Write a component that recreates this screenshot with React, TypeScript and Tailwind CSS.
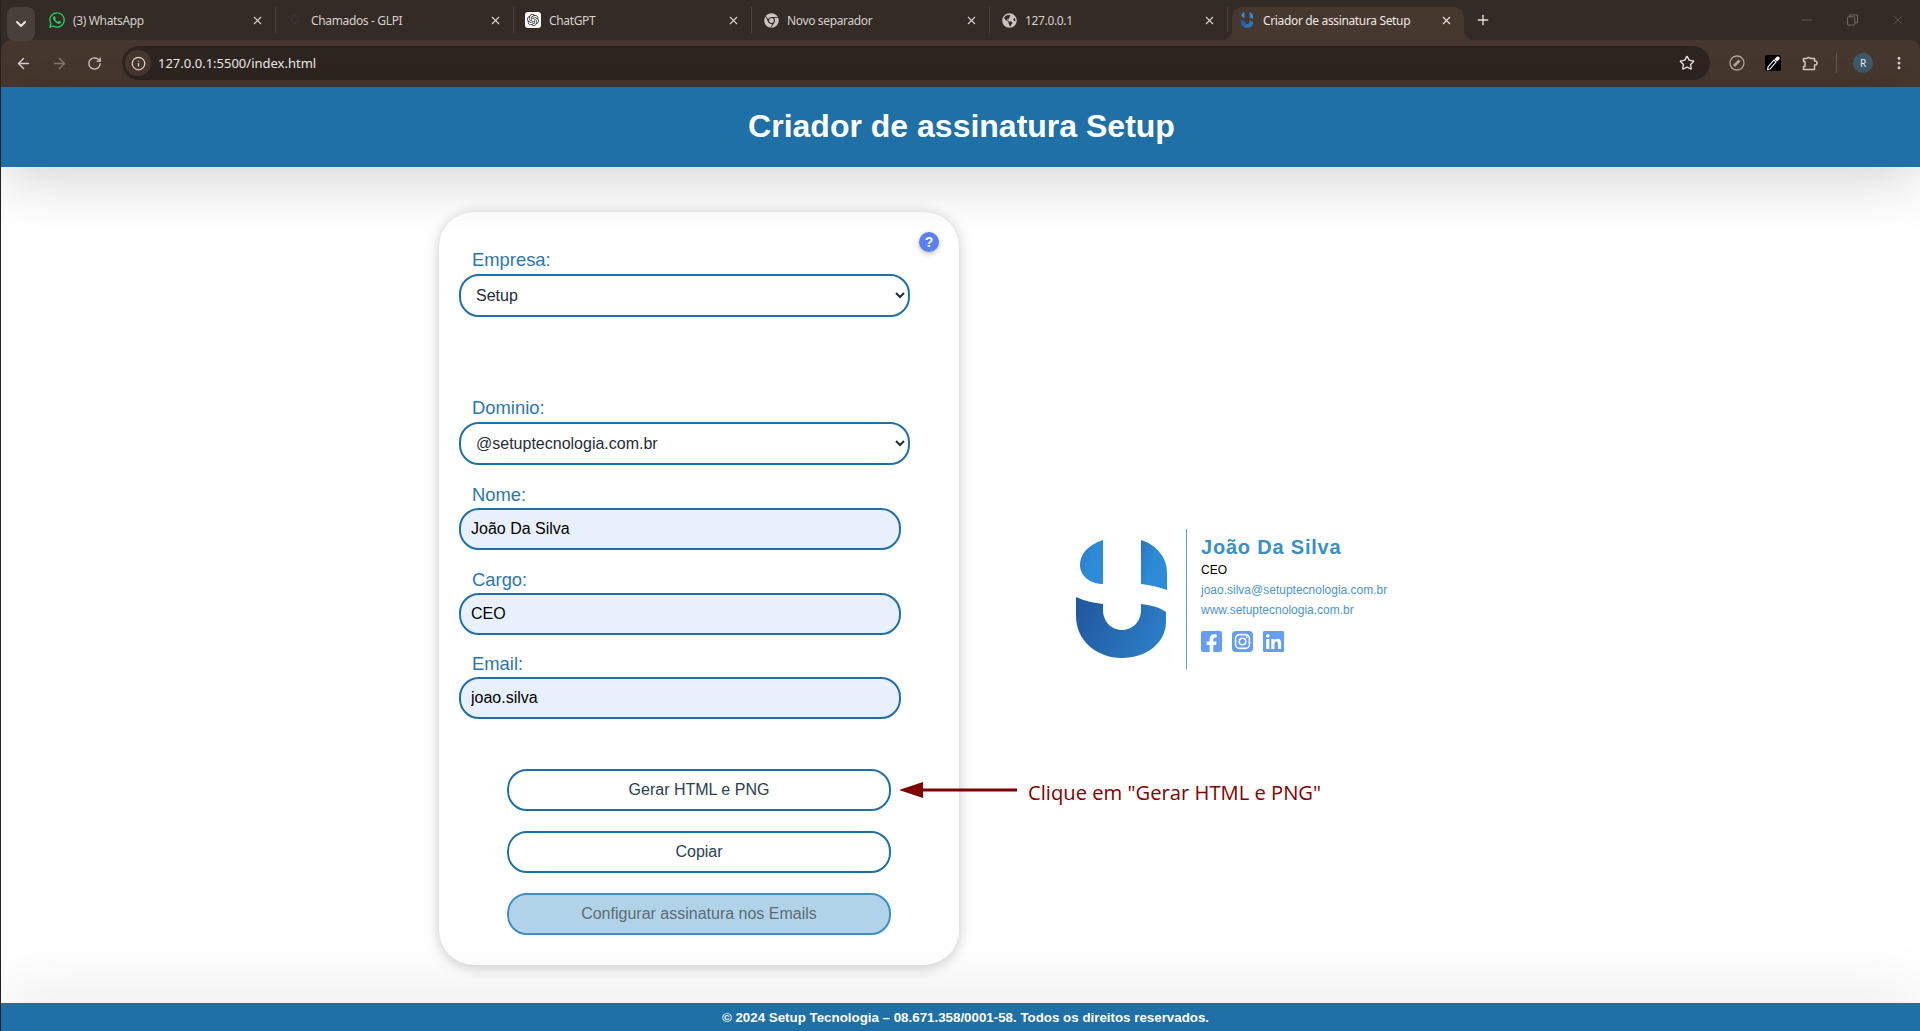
import React from 'react'
import { ArrowLeft, ArrowRight, ChevronDown, Info, Minus, MoreVertical, Plus, RotateCw, Star, X } from 'lucide-react'
import { FaChrome, FaFacebookSquare, FaGlobeAmericas, FaLinkedin, FaWhatsapp } from 'react-icons/fa'
import { SiOpenai } from 'react-icons/si'

const SetupLogo = ({ className }: { className?: string }) => (
  <svg viewBox="0 0 92 119" className={className}>
    <defs>
      <linearGradient id="logoTop" x1="0" y1="0" x2="1" y2="0.6">
        <stop offset="0" stopColor="#2a75bb" />
        <stop offset="0.5" stopColor="#2d8ad6" />
        <stop offset="1" stopColor="#2d8cd9" />
      </linearGradient>
      <linearGradient id="logoBottom" x1="0" y1="0.3" x2="1" y2="0.6">
        <stop offset="0" stopColor="#21599f" />
        <stop offset="1" stopColor="#2c7fc8" />
      </linearGradient>
    </defs>
    <path d="M27 0 V44 C12 44 4 34 4 25 C4 14 12 5 27 0 Z" fill="url(#logoTop)" />
    <path d="M65 0 C81 5 91 18 91 32 V50 C83 47 74 45 65 44 Z" fill="url(#logoTop)" />
    <path d="M0 57 C9 61 18 63 27 64 V70 C27 81 35 90 46 90 C57 90 65 81 65 70 V64 C74 65 83 67 90 72 V82 C90 103 70 118 46 118 C20 118 0 100 0 76 Z" fill="url(#logoBottom)" />
  </svg>
)

const tabs = [
  { title: '(3) WhatsApp', icon: <FaWhatsapp className="w-[18px] h-[18px] shrink-0 text-[#25d366]" /> },
  { title: 'Chamados - GLPI', icon: <span className="w-4 text-center text-[13px] font-bold leading-4 text-[#3a3330]">G</span> },
  {
    title: 'ChatGPT',
    icon: (
      <span className="w-4 h-4 rounded-[3px] bg-white flex items-center justify-center">
        <SiOpenai className="w-3 h-3 text-[#333]" />
      </span>
    ),
  },
  { title: 'Novo separador', icon: <FaChrome className="w-[15px] h-[15px] text-[#c9c3bf]" /> },
  { title: '127.0.0.1', icon: <FaGlobeAmericas className="w-[15px] h-[15px] text-[#c9c3bf]" /> },
]

const Tab = ({ title, icon }: { title: string; icon: React.ReactNode }) => (
  <div className="w-[238px] h-[26px] mt-[7px] shrink-0 flex items-center pl-[11px] pr-[11px] border-r border-[#4a413c]">
    <span className="w-4 flex justify-center shrink-0">{icon}</span>
    <span className="ml-2 flex-1 text-[12px] text-[#d5cfcb] font-['Noto_Sans',sans-serif] tracking-[-0.35px] pt-[1px]">{title}</span>
    <X className="w-[13px] h-[13px] text-[#d8d2ce]" strokeWidth={2} />
  </div>
)

const BrowserChrome = () => (
  <div className="bg-[#342b27]">
    {/* tab strip */}
    <div className="h-10 flex items-start">
      <div className="ml-[6px] mt-[7px] w-[28px] h-[34px] rounded-lg bg-[#4a403b] flex items-center justify-center shrink-0">
        <ChevronDown className="w-4 h-4 text-[#e8e3e0]" strokeWidth={3} />
      </div>
      <div className="ml-[3px] flex">
        {tabs.map((t) => (
          <Tab key={t.title} title={t.title} icon={t.icon} />
        ))}
        {/* active tab */}
        <div className="relative w-[232px] h-[33px] mt-[7px] ml-[4px] rounded-t-[10px] bg-[#46382f] flex items-center pl-[7px] pr-[11px] pb-[7px]">
          <SetupLogo className="w-4 h-4 shrink-0" />
          <span className="ml-2 flex-1 text-[12px] text-[#ece7e4] font-['Noto_Sans',sans-serif] tracking-[-0.35px] pt-[1px]">Criador de assinatura Setup</span>
          <X className="w-[13px] h-[13px] text-[#ece7e4]" strokeWidth={2} />
          <span className="absolute -left-[8px] bottom-0 w-2 h-2 bg-[radial-gradient(circle_at_0_0,#342b27_7.5px,#46382f_8px)]" />
          <span className="absolute -right-[8px] bottom-0 w-2 h-2 bg-[radial-gradient(circle_at_100%_0,#342b27_7.5px,#46382f_8px)]" />
        </div>
        <Plus className="ml-[11px] mt-[12px] w-4 h-4 text-[#e6e1de]" strokeWidth={2} />
      </div>
      <div className="ml-auto flex items-center mt-[12px] pr-[15px] text-[#7a6f6a]">
        <Minus className="w-4 h-4" strokeWidth={1} />
        <svg viewBox="0 0 12 12" className="ml-[32px] w-[11px] h-[12px]" fill="none" stroke="currentColor">
          <rect x="0.5" y="2.5" width="8" height="9" rx="1" />
          <path d="M3 2.5 V0.5 H11.5 V9 H8.5" />
        </svg>
        <X className="ml-[33px] w-[14px] h-[14px]" strokeWidth={1} />
      </div>
    </div>
    {/* toolbar */}
    <div className="h-[47px] bg-[#46382f] rounded-t-[10px] flex items-start pt-[6px] border-b border-[#3f3a38]">
      <div className="w-[121px] h-[34px] flex items-center pl-[14px] gap-[19px] shrink-0">
        <ArrowLeft className="w-[17px] h-[17px] text-[#d5cfcb]" strokeWidth={2} />
        <ArrowRight className="w-[17px] h-[17px] text-[#85796f]" strokeWidth={2} />
        <RotateCw className="w-[15px] h-[15px] text-[#d5cfcb]" strokeWidth={2} />
      </div>
      <div className="h-[34px] w-[1588px] rounded-full bg-[#2e2521] flex items-center pl-[3px] pr-[15px]">
        <span className="w-[26px] h-[26px] rounded-full bg-[#46382f] flex items-center justify-center">
          <Info className="w-[15px] h-[15px] text-[#ded8d4]" strokeWidth={2} />
        </span>
        <span className="ml-[7px] flex-1 text-[13px] text-[#f0ecea] font-['Noto_Sans',sans-serif] pt-[1px]">127.0.0.1:5500/index.html</span>
        <Star className="w-4 h-4 text-[#ece7e4]" strokeWidth={2} />
      </div>
      <div className="flex items-center h-[34px] pl-[19px] text-[#b5a79e]">
        <svg viewBox="0 0 16 16" className="w-4 h-4" fill="none" stroke="currentColor">
          <circle cx="8" cy="8" r="7" strokeWidth="1.3" />
          <path d="M5 11 L10.5 5.5" strokeWidth="2.6" />
        </svg>
        <span className="ml-[20px] w-4 h-4 rounded-[2px] bg-black flex items-center justify-center">
          <svg viewBox="0 0 16 16" className="w-4 h-4">
            <path d="M9.5 4 L10.5 3 C11.5 1 14 1 14.6 2.4 C15.2 4 14 5 13 5.6 L12 6.5 Z" fill="#fff" />
            <path d="M9 5 L11 7 L5 14 L2.6 14.6 L3 12 Z" fill="none" stroke="#fff" strokeWidth="1.1" />
          </svg>
        </span>
        <svg viewBox="0 0 16 16" className="ml-[21px] w-4 h-4" fill="none" stroke="#d8c9bf" strokeWidth="1.5" strokeLinejoin="round">
          <path d="M1.5 3.5 H5 A2 2 0 0 1 8.5 3.5 H12.5 V6 H13 A2 2 0 0 1 13 10 H12.5 V14.5 H1.5 V11.5 H3 V6.5 H1.5 Z" />
        </svg>
        <span className="ml-[18px] w-px h-5 bg-[#655850]" />
        <span className="ml-[16px] w-[20px] h-[20px] rounded-full bg-[#3f5a6b] text-[#e6eef3] text-[10px] flex items-center justify-center font-['Noto_Sans',sans-serif]">R</span>
        <MoreVertical className="ml-[18px] w-4 h-4 text-[#d8d2ce]" strokeWidth={2.5} />
      </div>
    </div>
  </div>
)

const Label = ({ children, className = '' }: { children: React.ReactNode; className?: string }) => (
  <label className={`block text-[18.4px] leading-[21px] text-[#2f76ad] ml-[13px] ${className}`}>{children}</label>
)

const selectCls =
  "block w-[451px] h-[43px] rounded-[20px] border-2 border-[#2070a8] bg-white pl-[11px] text-[16px] text-[#1f2d3a] font-['Liberation_Sans',sans-serif] outline-none"
const inputCls =
  "block w-[442px] h-[42px] rounded-[20px] border-2 border-[#2070a8] bg-[#e8f0fe] pl-[10px] text-[16px] text-black outline-none"

const SignatureCard = () => (
  <div className="flex h-[140px]">
    <SetupLogo className="w-[92px] h-[119px] mt-[11px] mr-[18px]" />
    <div className="w-px bg-[#5a9de0]" />
    <div className="ml-[14px]">
      <div className="mt-[7px] text-[20px] leading-[22px] font-bold text-[#3a8fc6] tracking-[0.8px]">João Da Silva</div>
      <div className="mt-[5px] text-[12px] leading-[14px] text-black">CEO</div>
      <div className="mt-[6px] text-[12px] leading-[14px] text-[#4f94c8]">joao.silva@setuptecnologia.com.br</div>
      <div className="mt-[6px] text-[12px] leading-[14px] text-[#4f94c8]">www.setuptecnologia.com.br</div>
      <div className="mt-[14px] flex gap-[10px] text-[#659df5]">
        <FaFacebookSquare className="w-[21px] h-[21px] scale-[1.15]" />
        <svg viewBox="0 0 21 21" className="w-[21px] h-[21px]" fill="none" stroke="#fff" strokeWidth="1.6">
          <rect width="21" height="21" rx="4" fill="currentColor" stroke="none" />
          <rect x="3.6" y="3.6" width="13.8" height="13.8" rx="4" />
          <circle cx="10.5" cy="10.5" r="3.3" />
          <circle cx="14.8" cy="6.2" r="0.9" fill="#fff" stroke="none" />
        </svg>
        <FaLinkedin className="w-[21px] h-[21px] scale-[1.15]" />
      </div>
    </div>
  </div>
)

export default function App() {
  return (
    <div className="h-screen overflow-hidden flex flex-col bg-white border-l border-[#222] font-['Liberation_Sans',Arial,sans-serif]">
      <BrowserChrome />

      <header className="relative z-10 h-[80px] shrink-0 bg-[#2070a8] shadow-[0_10px_60px_rgba(0,0,0,0.19)] flex items-center justify-center pb-[2px] pl-[2px]">
        <h1 className="text-[32px] font-bold text-white">Criador de assinatura Setup</h1>
      </header>

      <main className="relative flex-1 flex items-start pl-[438px]">
        {/* form card */}
        <div className="relative mt-[45px] w-[520px] h-[753px] rounded-[35px] bg-white shadow-[0_2px_14px_rgba(0,0,0,0.22)] pl-[20px] pt-[37px]">
          <span className="absolute top-[20px] right-[20px] w-5 h-5 rounded-full bg-[#5b7ff5] text-white text-[14px] font-bold flex items-center justify-center shadow-[0_2px_5px_rgba(0,0,0,0.25)]">?</span>
          <Label>Empresa:</Label>
          <select className={`${selectCls} mt-[4px]`} defaultValue="Setup">
            <option>Setup</option>
          </select>
          <Label className="mt-[80px]">Dominio:</Label>
          <select className={`${selectCls} mt-[4px]`} defaultValue="@setuptecnologia.com.br">
            <option>@setuptecnologia.com.br</option>
          </select>
          <Label className="mt-[19px]">Nome:</Label>
          <input className={`${inputCls} mt-[3px]`} defaultValue="João Da Silva" />
          <Label className="mt-[19px]">Cargo:</Label>
          <input className={`${inputCls} mt-[3px]`} defaultValue="CEO" />
          <Label className="mt-[18px]">Email:</Label>
          <input className={`${inputCls} mt-[3px]`} defaultValue="joao.silva" />

          <div className="mt-[50px] ml-[48px] w-[384px] flex flex-col gap-[20px]">
            <button className="h-[42px] rounded-[20px] border-2 border-[#2070a8] bg-white text-[16px] text-[#2c3e50]">Gerar HTML e PNG</button>
            <button className="h-[42px] rounded-[20px] border-2 border-[#2070a8] bg-white text-[16px] text-[#2c3e50]">Copiar</button>
            <button className="h-[42px] rounded-[20px] border-2 border-[#3d8fc6] bg-[#b0d3e9] text-[16px] text-[#5f6b73]">Configurar assinatura nos Emails</button>
          </div>

          {/* annotation over the card edge */}
          <div className="absolute left-[460px] top-[566px] flex items-start whitespace-nowrap">
            <svg viewBox="0 0 118 18" className="w-[118px] h-[18px] mt-[3px]">
              <path d="M0 9 L24 1 V7.5 H118 V10.5 H24 V17 Z" fill="#800000" />
            </svg>
            <span className="ml-[11px] mt-[2px] text-[20.2px] leading-6 text-[#800000] font-['Open_Sans',sans-serif]">Clique em "Gerar HTML e PNG"</span>
          </div>
        </div>

        <div className="ml-[117px] mt-[362px]">
          <SignatureCard />
        </div>
      </main>

      <footer className="relative z-10 h-[28px] shrink-0 bg-[#2070a8] shadow-[0_-2px_65px_rgba(0,0,0,0.14)] flex items-center justify-center pl-[10px] pt-[2px]">
        <span className="text-[13.33px] font-bold text-white">© 2024 Setup Tecnologia – 08.671.358/0001-58. Todos os direitos reservados.</span>
      </footer>
    </div>
  )
}
